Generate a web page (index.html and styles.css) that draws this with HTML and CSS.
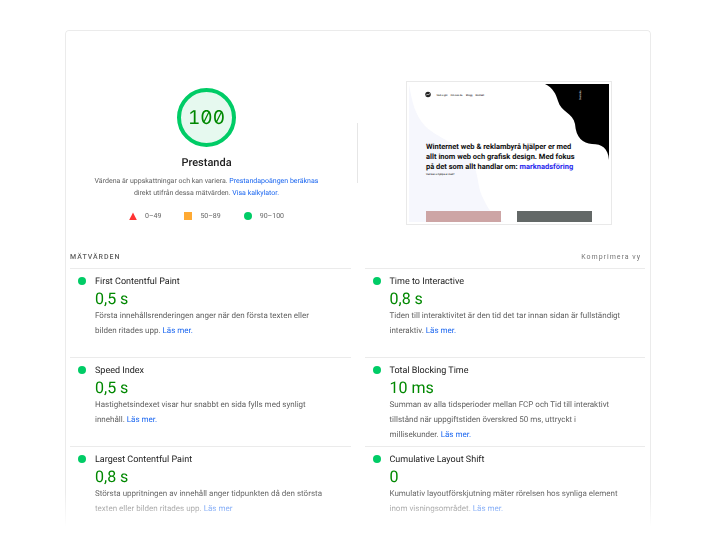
FILE: index.html
```
<!DOCTYPE html>
<html lang="sv">
<head>
    <meta charset="UTF-8">
    <meta name="viewport" content="width=device-width, initial-scale=1.0">
    <title>Prestanda</title>
    <link rel="stylesheet" href="styles.css">
</head>
<body>
    <main class="report">
        <section class="summary">
            <div class="score">
                <div class="gauge">100</div>
                <h1>Prestanda</h1>
                <p class="score-text">Värdena är uppskattningar och kan variera. <a href="#">Prestandapoängen beräknas</a><br>direkt utifrån dessa mätvärden. <a href="#">Visa kalkylator.</a></p>
                <ul class="legend">
                    <li><svg width="8" height="8" viewBox="0 0 8 8"><path d="M4 0.5L7.8 8H0.2z" fill="#f33"/></svg>0–49</li>
                    <li><svg width="8" height="8" viewBox="0 0 8 8"><rect width="8" height="8" fill="#fa3"/></svg>50–89</li>
                    <li><svg width="8" height="8" viewBox="0 0 8 8"><circle cx="4" cy="4" r="4" fill="#0c6"/></svg>90–100</li>
                </ul>
            </div>
            <div class="divider"></div>
            <div class="preview">
                <svg class="thumbnail" viewBox="0 0 400 276" role="img" aria-label="Winternet">
                    <rect width="400" height="276" fill="#fff"/>
                    <path d="M0 0C6 36 12 62 32 84C56 108 104 120 126 156C142 184 134 204 150 232C160 254 172 268 190 276H0z" fill="#f6f7fd"/>
                    <path d="M272 0C288 8 294 20 298 34C304 56 328 58 332 80C334 108 348 118 366 120C386 120 398 128 400 152V0z" fill="#000"/>
                    <circle cx="38" cy="21" r="5.500" fill="#222"/>
                    <path d="M34 23C36 18 38 24 42 19" stroke="#fff" stroke-width="1.400" fill="none"/>
                    <g class="thumb-nav">
                        <text x="55" y="23">Vad vi gör</text>
                        <text x="83" y="23">Om oss du</text>
                        <text x="114" y="23">Blogg</text>
                        <text x="133" y="23">Kontakt</text>
                    </g>
                    <text class="thumb-side" transform="translate(344 32) rotate(-90)">Svenska</text>
                    <g class="thumb-title">
                        <text x="34" y="130">Winternet web &amp; reklambyrå hjälper er med</text>
                        <text x="34" y="150">allt inom web och grafisk design. Med fokus</text>
                        <text x="34" y="169">på det som allt handlar om: <tspan fill="#2a2aec">marknadsföring</tspan></text>
                    </g>
                    <text class="thumb-nav" x="34" y="182">Vad kan vi hjälpa er med?</text>
                    <rect x="34" y="254" width="150" height="22" fill="#cda5a5"/>
                    <rect x="216" y="254" width="150" height="22" fill="#636867"/>
                </svg>
            </div>
        </section>

        <header class="metrics-header">
            <h2>MÄTVÄRDEN</h2>
            <button class="toggle" type="button">Komprimera vy</button>
        </header>

        <section class="metrics">
            <article class="metric">
                <h3>First Contentful Paint</h3>
                <div class="value">0,5 s</div>
                <p>Första innehållsrenderingen anger när den första texten eller<br>bilden ritades upp. <a href="#">Läs mer.</a></p>
            </article>
            <article class="metric">
                <h3>Time to Interactive</h3>
                <div class="value">0,8 s</div>
                <p>Tiden till interaktivitet är den tid det tar innan sidan är fullständigt<br>interaktiv. <a href="#">Läs mer.</a></p>
            </article>
            <article class="metric">
                <h3>Speed Index</h3>
                <div class="value">0,5 s</div>
                <p>Hastighetsindexet visar hur snabbt en sida fylls med synligt<br>innehåll. <a href="#">Läs mer.</a></p>
            </article>
            <article class="metric">
                <h3>Total Blocking Time</h3>
                <div class="value">10 ms</div>
                <p>Summan av alla tidsperioder mellan FCP och Tid till interaktivt<br>tillstånd när uppgiftstiden överskred 50 ms, uttryckt i<br>millisekunder. <a href="#">Läs mer.</a></p>
            </article>
            <article class="metric">
                <h3>Largest Contentful Paint</h3>
                <div class="value">0,8 s</div>
                <p>Största uppritningen av innehåll anger tidpunkten då den största<br>texten eller bilden ritades upp. <a href="#">Läs mer</a></p>
            </article>
            <article class="metric">
                <h3>Cumulative Layout Shift</h3>
                <div class="value">0</div>
                <p>Kumulativ layoutförskjutning mäter rörelsen hos synliga element<br>inom visningsområdet. <a href="#">Läs mer.</a></p>
            </article>
        </section>
    </main>
</body>
</html>
```
FILE: styles.css
```
* {
    box-sizing: border-box;
}
body {
    margin: 0;
    padding: 30px 69px 0 65px;
    background-color: #fff;
    font-family: Roboto, sans-serif;
    font-size: 7px;
    color: #616161;
    text-rendering: geometricPrecision;
}
h1, h2, h3, p, ul {
    margin: 0;
    padding: 0;
}
a {
    color: #1a66f0;
    text-decoration: none;
}
.report {
    padding: 50px 5px 10px 4px;
    border: 1px solid #ebebeb;
    border-bottom: none;
    border-radius: 4px;
    /* fade out the end of the report */
    -webkit-mask-image: linear-gradient(to top, transparent 18px, #000 53px);
    mask-image: linear-gradient(to top, transparent 18px, #000 53px);
}
.summary {
    display: grid;
    grid-template-columns: 1fr 1px 1fr;
    gap: 14px;
    margin-bottom: 26px;
}
.score {
    display: flex;
    flex-direction: column;
    align-items: center;
    padding-top: 7px;
}
.gauge {
    display: flex;
    align-items: center;
    justify-content: center;
    width: 59px;
    height: 59px;
    border: 4px solid #0c6;
    border-radius: 50%;
    background-color: #e6f9ef;
    color: #080;
    font-family: Inter, monospace;
    font-size: 19px;
    font-feature-settings: "zero", "tnum";
}
.score h1 {
    margin-top: 8px;
    font-size: 11px;
    line-height: 15px;
    font-weight: 500;
    color: #212121;
}
.score-text {
    margin-top: 5px;
    line-height: 12px;
    text-align: center;
    white-space: nowrap;
}
.legend {
    display: flex;
    gap: 23px;
    margin-top: 12px;
    line-height: 10px;
    list-style: none;
}
.legend li {
    display: flex;
    align-items: center;
    gap: 8px;
}
.divider {
    height: 60px;
    margin-top: 42px;
    background-color: #e6e6e6;
}
.preview {
    display: flex;
    align-items: flex-start;
    justify-content: center;
    padding-left: 1px;
}
.thumbnail {
    width: 206px;
    padding: 2px;
    border: 1px solid #e9e9e9;
}
.thumb-nav {
    font-size: 5px;
    font-weight: 500;
    fill: #222;
}
.thumb-side {
    font-size: 5px;
    fill: #fff;
}
.thumb-title {
    font-size: 15px;
    font-weight: 700;
    fill: #111;
}
.metrics-header {
    display: flex;
    align-items: center;
    justify-content: space-between;
    padding: 0 4px 5px 0;
    line-height: 12px;
}
.metrics-header h2 {
    font-size: 7px;
    font-weight: 500;
    letter-spacing: 1px;
}
.toggle {
    padding: 0;
    border: none;
    background: none;
    font: inherit;
    letter-spacing: 1px;
    color: #757575;
    cursor: pointer;
}
.metrics {
    display: grid;
    grid-template-columns: 1fr 1fr;
    gap: 0 14px;
}
.metric {
    position: relative;
    padding: 6px 0 4px 25px;
    border-top: 1px solid #ebebeb;
}
.metric::before {
    content: "";
    position: absolute;
    top: 8px;
    left: 8px;
    width: 8px;
    height: 8px;
    border-radius: 50%;
    background-color: #0c6;
}
.metric h3 {
    font-size: 9px;
    line-height: 14px;
    font-weight: 400;
    color: #212121;
}
.value {
    font-size: 16px;
    line-height: 19px;
    color: #080;
}
.metric p {
    min-height: 45px;
    font-size: 8px;
    line-height: 15px;
    white-space: nowrap;
}
```
